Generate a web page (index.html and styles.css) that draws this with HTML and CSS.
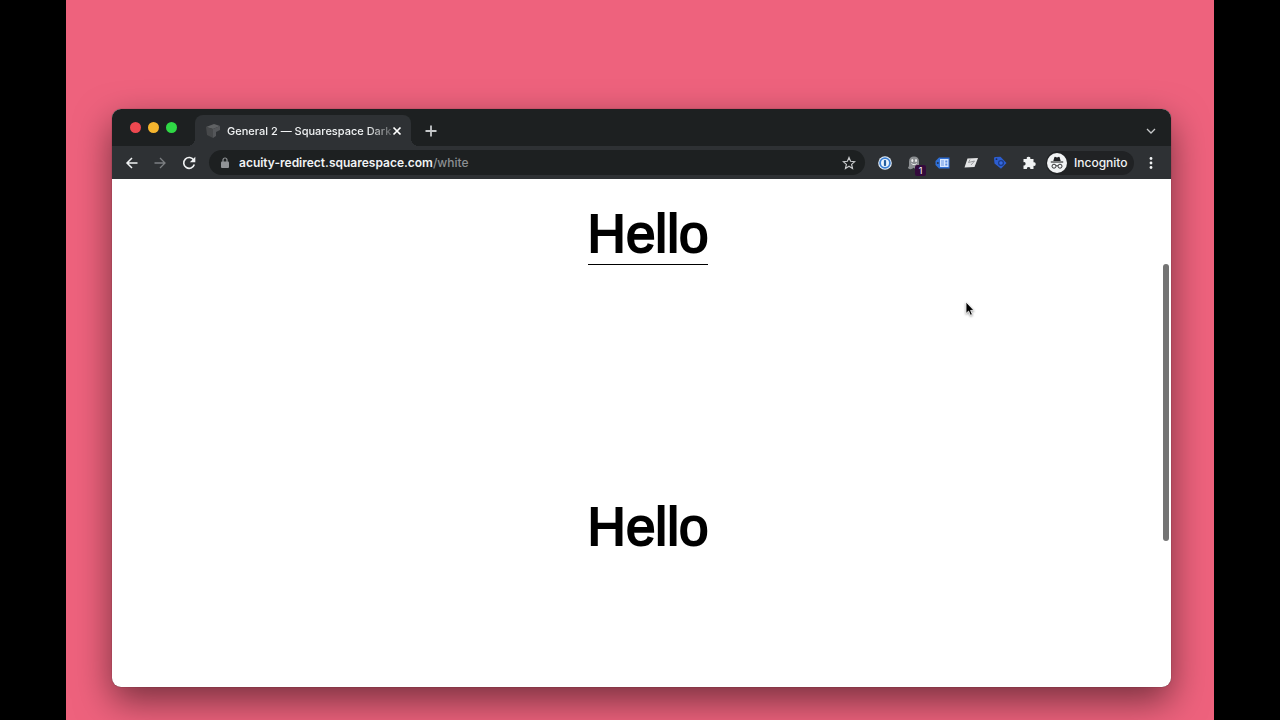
FILE: index.html
```html
<!DOCTYPE html>
<html lang="en">
<head>
<meta charset="utf-8">
<title>General 2 — Squarespace Dark</title>
<link rel="stylesheet" href="styles.css">
</head>
<body>
<div class="desktop">
  <div class="window">

    <header class="tab-strip">
      <div class="lights">
        <button class="light red" aria-label="Close window"></button>
        <button class="light yellow" aria-label="Minimize window"></button>
        <button class="light green" aria-label="Zoom window"></button>
      </div>
      <div class="tab">
        <svg class="favicon" viewBox="0 0 14 14" aria-hidden="true">
          <path d="M0 3 8 0l6 2-7 3z" fill="#606264"/>
          <path d="M0 3l7 2v9l-6-3z" fill="#46484a"/>
          <path d="M7 5l7-3v4l-4 2v4l-3 2z" fill="#55575a"/>
        </svg>
        <span class="tab-title">General 2 — Squarespace Dark</span>
        <button class="icon-btn tab-close" aria-label="Close tab">
          <svg viewBox="0 0 10 10"><path d="M1.500 1.500l7 7M8.500 1.500l-7 7" stroke="#fff" stroke-width="1.700" fill="none"/></svg>
        </button>
      </div>
      <button class="icon-btn new-tab" aria-label="New tab">
        <svg viewBox="0 0 12 12"><path d="M6 .5v11M.5 6h11" stroke="#c6c8ca" stroke-width="1.800"/></svg>
      </button>
      <button class="icon-btn tab-search" aria-label="Search tabs">
        <svg viewBox="0 0 10 10"><path d="M1 3l4 4 4-4" stroke="#c6c8ca" stroke-width="1.300" fill="none"/></svg>
      </button>
    </header>

    <nav class="toolbar">
      <button class="icon-btn" aria-label="Back">
        <svg viewBox="0 0 18 18"><path d="M15.500 9H5M10 4L5 9l5 5" stroke="#f1f3f4" stroke-width="1.500" fill="none"/></svg>
      </button>
      <button class="icon-btn" aria-label="Forward">
        <svg viewBox="0 0 18 18"><path d="M3.500 9H14M9 4l5 5-5 5" stroke="#7c7f82" stroke-width="1.300" fill="none"/></svg>
      </button>
      <button class="icon-btn" aria-label="Reload">
        <svg viewBox="0 0 18 18"><path d="M13.800 6.200A5.400 5.400 0 1 0 14.300 10.500" stroke="#f1f3f4" stroke-width="1.600" fill="none"/><path d="M15.300 2.800v5.500H9.800z" fill="#f1f3f4"/></svg>
      </button>

      <div class="address">
        <svg class="lock" viewBox="0 0 10 12" aria-hidden="true"><rect x="1" y="4.500" width="8" height="6.500" rx="1" fill="#909396"/><path d="M3 5V3a2 2 0 0 1 4 0v2" stroke="#909396" stroke-width="1.200" fill="none"/></svg>
        <a class="url" href="#">acuity-redirect.squarespace.com<span class="path">/white</span></a>
        <button class="icon-btn star" aria-label="Bookmark this tab">
          <svg viewBox="0 0 14 14"><path d="M7 1.500l1.600 3.800 4.100.4-3.100 2.700.9 4L7 10.300l-3.500 2.100.9-4L1.300 5.700l4.100-.4z" stroke="#c6c8ca" stroke-width="1.200" fill="none"/></svg>
        </button>
      </div>

      <button class="icon-btn" aria-label="1Password">
        <svg viewBox="0 0 18 18"><circle cx="9" cy="9" r="6.800" fill="#eaf3fc"/><circle cx="9" cy="9" r="4.900" fill="#eaf3fc" stroke="#3b7fd4" stroke-width="1.800"/><rect x="7.900" y="6" width="2.200" height="6" rx=".8" fill="#235c9f"/></svg>
      </button>
      <button class="icon-btn" aria-label="Ghostery">
        <svg viewBox="0 0 18 18"><path d="M4.500 15c-1-.3-1.700-1-1.500-1.500.8-.4 1-1.500 1-3V7.500C4 4.200 6 2.500 9 2.500s5 1.700 5 5v4c0 1.500.5 2 .5 2.500-1 .6-2 .4-3-.3-1 .9-2 .9-3 .1-1 1.200-2.500 1.700-4 1.200z" fill="#8c8f92"/><ellipse cx="7.300" cy="6.600" rx="1" ry="1.500" fill="#eee"/><ellipse cx="11" cy="6.600" rx="1" ry="1.500" fill="#eee"/><path d="M6.500 9.500c1.500 1.500 3.800 1.500 5.200 0" stroke="#eee" stroke-width="1" fill="none"/></svg>
        <span class="badge">1</span>
      </button>
      <button class="icon-btn" aria-label="Tag reader">
        <svg viewBox="0 0 18 18"><path d="M5 3.500h10.500v11H5L1.500 11V7z" fill="#2f6fd6"/><circle cx="3.800" cy="9" r="1" fill="#22314c"/><rect x="6" y="5" width="8.500" height="8" fill="#d5e5ff"/><path d="M7 7h3M7 9h3M7 11h3" stroke="#5b8de0" stroke-width=".9"/><path d="M11.300 6.500h2v2h-2zM11.300 9.500h2v2h-2z" fill="#5b8de0"/></svg>
      </button>
      <button class="icon-btn" aria-label="Page tools">
        <svg viewBox="0 0 18 18"><path d="M4.500 4.500l10.500-.5L11.500 13l-10 .5z" fill="#e4e5e6"/><path d="M5.500 8.500l6-1.500M7 5.500l-1.500 3M11.500 7L8 11" stroke="#85888b" stroke-width=".8" fill="none"/></svg>
      </button>
      <button class="icon-btn" aria-label="Tag assistant">
        <svg viewBox="0 0 18 18"><path d="M2 4.500c0-1 .6-1.500 1.500-1.500l5-.3L14.500 9 9 14.700 2.500 9.500z" fill="#2c5dd0"/><circle cx="9" cy="9" r="2.400" fill="#3568df" stroke="#1b3b86" stroke-width="1.200"/><circle cx="4.500" cy="5.200" r=".9" fill="#182e63"/></svg>
      </button>
      <button class="icon-btn" aria-label="Extensions">
        <svg viewBox="0 0 18 18"><path d="M2.500 5h3.300a1.800 1.800 0 1 1 3.500 0h3.200v3.300a1.800 1.800 0 1 1 0 3.500V15H9.300a1.700 1.700 0 1 0-3.300 0H2.500v-3.500a1.700 1.700 0 1 0 0-3.300z" fill="#f1f3f4"/></svg>
      </button>

      <button class="profile">
        <svg viewBox="0 0 20 20" aria-hidden="true"><circle cx="10" cy="10" r="10" fill="#f1f3f4"/><path d="M6.300 8l1-3.500c.2-.7.700-.8 1.200-.5 1 .5 2 .5 3 0 .6-.3 1-.2 1.200.5l1 3.500z" fill="#202124"/><path d="M3.800 9h12.400" stroke="#202124" stroke-width="1.100"/><circle cx="7" cy="13.200" r="2" fill="none" stroke="#202124" stroke-width=".9"/><circle cx="13" cy="13.200" r="2" fill="none" stroke="#202124" stroke-width=".9"/><path d="M9 12.900q1-.6 2 0" stroke="#202124" stroke-width=".8" fill="none"/></svg>
        Incognito
      </button>
      <button class="icon-btn menu" aria-label="Menu">
        <svg viewBox="0 0 18 18" fill="#f1f3f4"><circle cx="9" cy="4.500" r="1.400"/><circle cx="9" cy="9" r="1.400"/><circle cx="9" cy="13.500" r="1.400"/></svg>
      </button>
    </nav>

    <main class="page">
      <section class="block">
        <h1 class="hello"><a href="#">Hello</a></h1>
      </section>
      <section class="block">
        <h1 class="hello">Hello</h1>
      </section>
      <div class="scroll-thumb"></div>
      <svg class="cursor" viewBox="0 0 10 16" aria-hidden="true"><path d="M1 1v11.500l2.600-2.400 1.800 4.200 2-.9-1.800-4H9z" fill="#000" stroke="#fff" stroke-width=".8"/></svg>
    </main>

  </div>
</div>
</body>
</html>
```

FILE: styles.css
```css
* {
  box-sizing: border-box;
}
body {
  margin: 0;
  background: #000;
  font-family: Inter, sans-serif;
}
button {
  padding: 0;
  border: 0;
  background: none;
  font-family: inherit;
  color: inherit;
}
svg {
  display: block;
  width: 100%;
  height: 100%;
}
.desktop {
  display: flex;
  min-height: 100vh;
  margin: 0 66px;
  padding: 109px 43px 33px 46px;
  background: #ee627d;
  overflow: hidden;
}
.window {
  flex: 1;
  display: flex;
  flex-direction: column;
  min-width: 0;
  border-radius: 9px;
  background: #fff;
  box-shadow: 0 0 1px rgba(0,0,0,0.6), 0 14px 36px rgba(0,0,0,0.5);
}

/* tabs */
.tab-strip {
  display: flex;
  align-items: center;
  height: 37px;
  padding: 0 15px 0 18px;
  background: #1d2021;
  border-radius: 9px 9px 0 0;
}
.lights {
  display: flex;
  gap: 7px;
  width: 65px;
}
.light {
  width: 11px;
  height: 11px;
  border-radius: 50%;
}
.red { background: #ed4850; }
.yellow { background: #f5b52e; }
.green { background: #2fd845; }
.tab {
  position: relative;
  display: flex;
  align-items: center;
  align-self: flex-end;
  width: 216px;
  height: 31px;
  padding: 0 9px 0 11px;
  background: #2e3134;
  border-radius: 8px 8px 0 0;
}
.tab::before,
.tab::after {
  content: "";
  position: absolute;
  bottom: 0;
  width: 8px;
  height: 8px;
}
.tab::before {
  left: -8px;
  background: radial-gradient(circle at 0 0, transparent 8px, #2e3134 8px);
}
.tab::after {
  right: -8px;
  background: radial-gradient(circle at 100% 0, transparent 8px, #2e3134 8px);
}
.favicon {
  flex: none;
  width: 14px;
  height: 14px;
  margin-right: 7px;
}
.tab-title {
  flex: 1;
  white-space: nowrap;
  font-size: 11px;
  font-weight: 500;
  color: #f1f3f4;
  -webkit-mask-image: linear-gradient(to right, #000 140px, transparent 172px);
  mask-image: linear-gradient(to right, #000 140px, transparent 172px);
}
.icon-btn {
  flex: none;
  position: relative;
  width: 18px;
  height: 18px;
}
.tab-close {
  width: 10px;
  height: 10px;
}
.new-tab,
.tab-search {
  width: 12px;
  height: 12px;
  margin-top: 6px;
}
.new-tab {
  margin-left: 14px;
}
.tab-search {
  width: 10px;
  height: 10px;
  margin-left: auto;
}

/* toolbar */
.toolbar {
  display: flex;
  align-items: center;
  gap: 11px;
  height: 33px;
  padding: 0 11px 0 10px;
  background: #2e3134;
}
.address {
  flex: 1;
  display: flex;
  align-items: center;
  min-width: 0;
  height: 25px;
  padding: 0 9px 0 11px;
  border-radius: 13px;
  background: #1d2021;
}
.lock {
  flex: none;
  width: 10px;
  height: 12px;
  margin-right: 9px;
}
.url {
  flex: 1;
  overflow: hidden;
  white-space: nowrap;
  font-size: 12px;
  font-weight: 600;
  color: #f1f3f4;
  text-decoration: none;
}
.path {
  font-weight: 500;
  color: #8c8f92;
}
.star {
  width: 14px;
  height: 14px;
}
.badge {
  position: absolute;
  right: -3px;
  bottom: -4px;
  width: 11px;
  height: 11px;
  border-radius: 2px;
  background: #330a3c;
  color: #fff;
  font-size: 9px;
  line-height: 11px;
  text-align: center;
}
.profile {
  flex: none;
  display: flex;
  align-items: center;
  gap: 7px;
  width: 88px;
  height: 24px;
  margin-left: -4px;
  padding-left: 1px;
  border-radius: 12px;
  background: #202224;
  font-size: 12px;
  font-weight: 500;
  color: #f1f3f4;
}
.profile svg {
  flex: none;
  width: 20px;
  height: 20px;
}
.menu {
  margin-left: -3px;
}

/* page content */
.page {
  flex: 1;
  position: relative;
  padding: 28px 0 0 13px;
}
.block {
  height: 293px;
  text-align: center;
}
.block:last-of-type {
  height: auto;
}
.hello {
  margin: 0;
  font-family: "Liberation Sans", Arial, sans-serif;
  font-size: 53px;
  font-weight: 400;
  line-height: 53px;
  color: #000;
  -webkit-text-stroke: 2px #000;
}
.hello a {
  display: inline-block;
  padding-bottom: 4px;
  border-bottom: 1px solid #000;
  color: inherit;
  text-decoration: none;
}
.scroll-thumb {
  position: absolute;
  top: 85px;
  right: 2px;
  width: 6px;
  height: 277px;
  border-radius: 3px;
  background: #747474;
}
.cursor {
  position: absolute;
  top: 122px;
  left: 853px;
  width: 10px;
  height: 16px;
  filter: drop-shadow(0 1px 1px rgba(0,0,0,0.4));
}
```
